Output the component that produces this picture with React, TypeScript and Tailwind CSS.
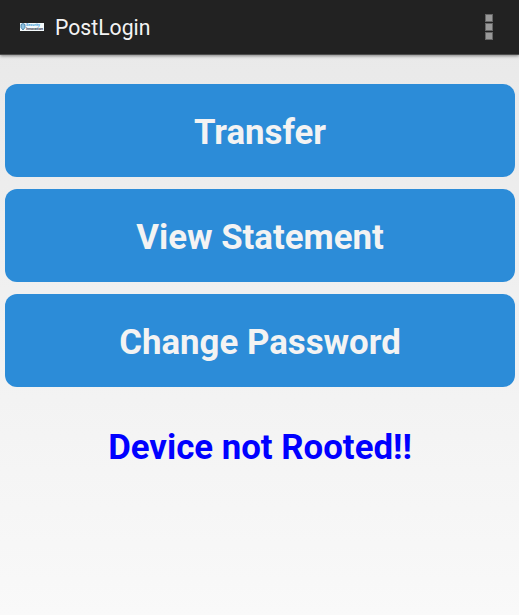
import React from 'react';

interface MenuButtonProps {
    label: string
}

function MenuButton(props: MenuButtonProps) {
    return (
        <button className="h-[93px] w-full rounded-[12px] bg-[#2c8cd8] pt-1 text-[34.8px] leading-none font-bold text-[#f3f3f3]">
            {props.label}
        </button>
    );
}

function Logo() {
    return (
        <svg className="h-2 w-6" viewBox="0 0 24 8">
            <rect width="24" height="8" fill="#f4fafc" />
            <path d="M1 1.5l2-1 2 1v3L3 7 1 4.5z" fill="#8fc1e0" stroke="#32749f" strokeWidth="0.8" />
            <text x="6" y="3.2" fontSize="3" fontWeight="700" fill="#3b9ad6" textLength="14" lengthAdjust="spacingAndGlyphs">Security</text>
            <text x="6" y="6.9" fontSize="3" fontWeight="700" fill="#333f49" textLength="17" lengthAdjust="spacingAndGlyphs">Innovation</text>
        </svg>
    );
}

function App() {
    return (
        <div className="flex h-screen flex-col bg-linear-to-b from-[#e8e8e8] to-[#f9f9f9] font-['Roboto',sans-serif]">
            <header className="flex h-[55px] shrink-0 items-center border-b border-[#4c4c4c] bg-[#222222] pr-[26px] pl-5 text-[#f3f3f3] shadow-[0_1px_3px_rgba(0,0,0,0.45)]">
                <Logo />
                <h1 className="ml-[11px] grow pt-[2px] text-[21.2px] leading-none">PostLogin</h1>
                <div className="flex flex-col gap-[1px]">
                    <span className="h-2 w-2 border border-[#666666] bg-[#999999]" />
                    <span className="h-2 w-2 border border-[#666666] bg-[#999999]" />
                    <span className="h-2 w-2 border border-[#666666] bg-[#999999]" />
                </div>
            </header>
            <main className="flex flex-col gap-3 pt-[29px] pr-1 pl-[5px]">
                <MenuButton label="Transfer" />
                <MenuButton label="View Statement" />
                <MenuButton label="Change Password" />
                <p className="pt-[31px] text-center text-[34.8px] leading-none font-bold text-[#0000ff]">Device not Rooted!!</p>
            </main>
        </div>
    );
}

export default App;
